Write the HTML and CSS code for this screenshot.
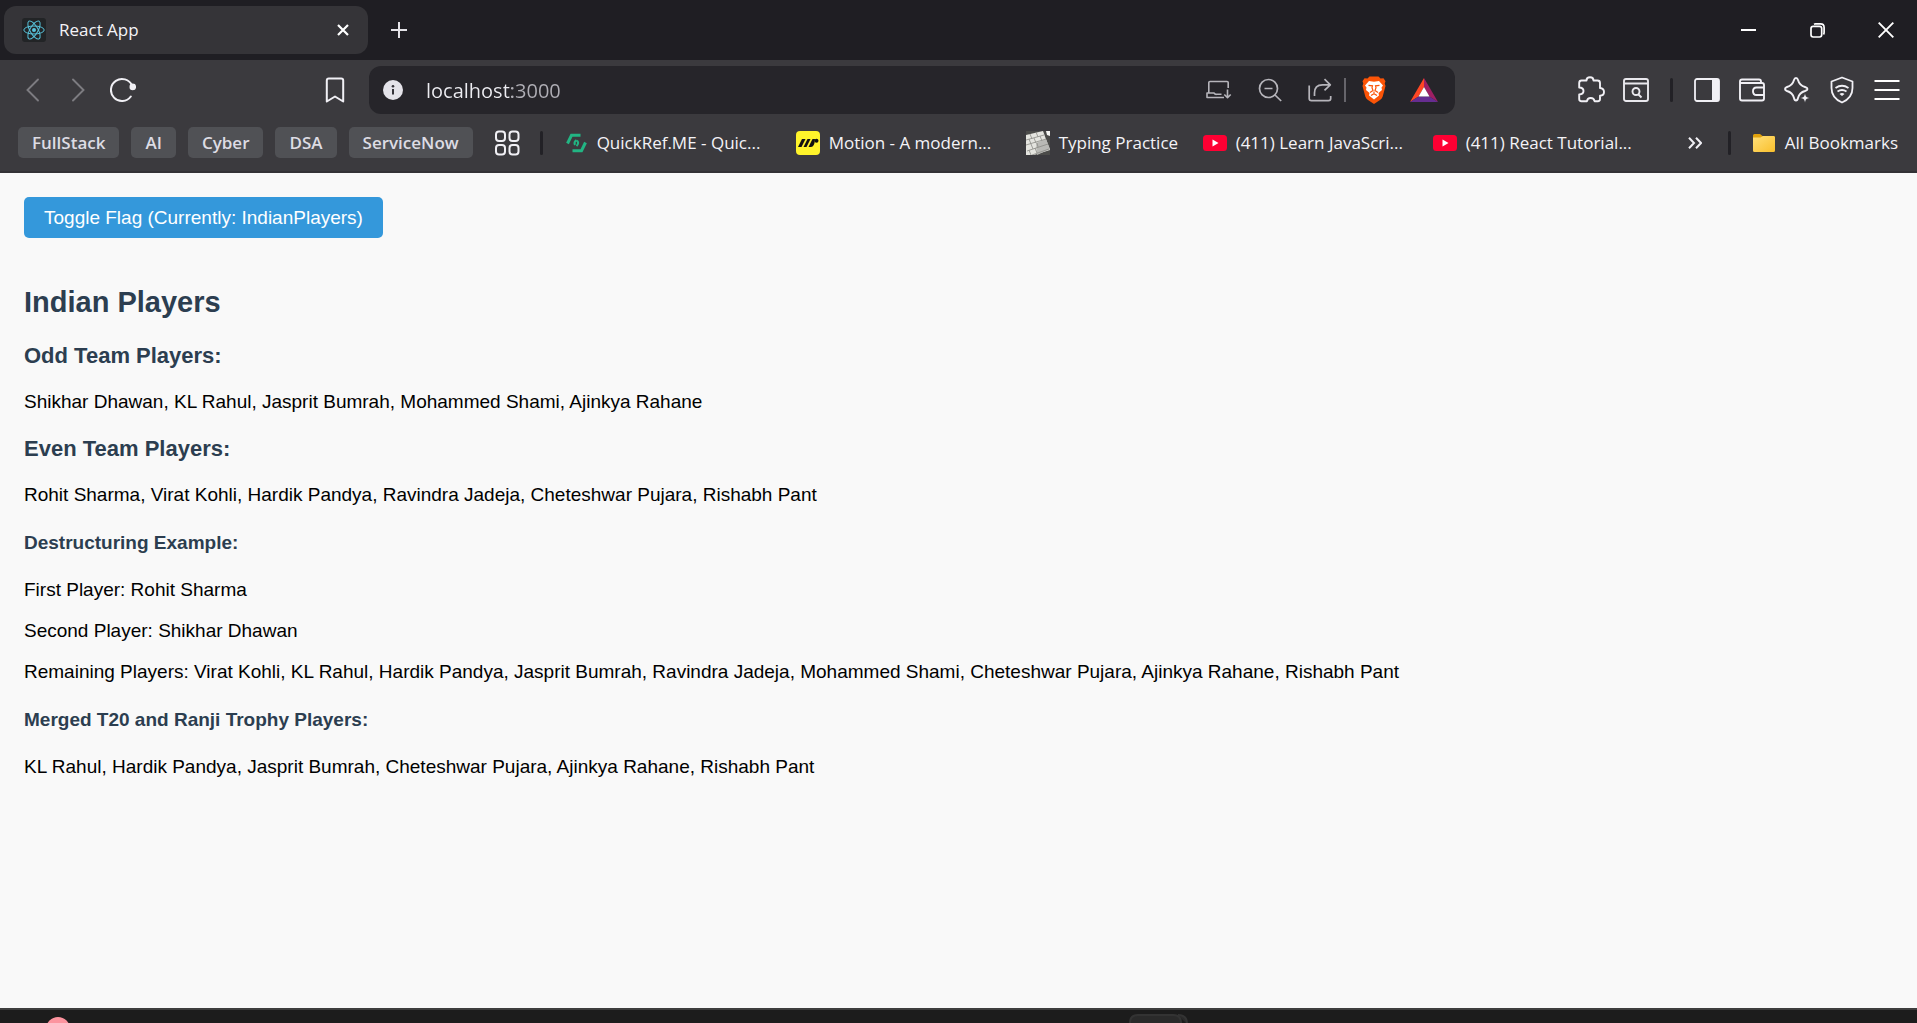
FILE: index.html
```html
<!DOCTYPE html>
<html lang="en">
<head>
<meta charset="utf-8">
<title>React App</title>
<link rel="stylesheet" href="styles.css">
</head>
<body>
<header class="browser">
  <div class="tabstrip">
    <div class="tab">
      <svg class="tab-icon" width="24" height="24" viewBox="0 0 24 24" fill="none" stroke="#58c4dc" stroke-width="1"><rect width="24" height="24" rx="3" fill="#222426" stroke="none"/><ellipse cx="12" cy="12" rx="10.2" ry="4"/><ellipse cx="12" cy="12" rx="10.2" ry="4" transform="rotate(60 12 12)"/><ellipse cx="12" cy="12" rx="10.2" ry="4" transform="rotate(120 12 12)"/><circle cx="12" cy="12" r="2" fill="#58c4dc" stroke="none"/></svg>
      <span class="tab-title">React App</span>
      <button class="tab-close" aria-label="Close tab"><svg width="12" height="12" viewBox="0 0 12 12" stroke="#fff" stroke-width="2.2"><path d="M1 1l10 10M11 1L1 11"/></svg></button>
    </div>
    <button class="new-tab" aria-label="New tab"><svg width="16" height="16" viewBox="0 0 16 16" stroke="#e4e3e8" stroke-width="2"><path d="M8 0v16M0 8h16"/></svg></button>
    <div class="window-controls">
      <button aria-label="Minimize"><svg width="15" height="15" viewBox="0 0 15 15" stroke="#fff" stroke-width="2"><path d="M0 7h15"/></svg></button>
      <button aria-label="Restore"><svg width="15" height="15" viewBox="0 0 15 15" fill="none" stroke="#fff" stroke-width="1.7"><rect x="1" y="3.3" width="10.7" height="10.7" rx="2.2"/><path d="M4 1.2Q4.600 .9 5.500 .9H10.500Q14.100.9 14.100 4.500V9.500Q14.100 10.700 13.500 11.500"/></svg></button>
      <button aria-label="Close"><svg width="16" height="16" viewBox="0 0 16 16" stroke="#fff" stroke-width="1.9"><path d="M.7.7l14.600 14.600M15.300.7L.7 15.300"/></svg></button>
    </div>
  </div>

  <div class="toolbar">
    <div class="nav">
      <button aria-label="Back"><svg width="26" height="26" viewBox="0 0 26 26" fill="none" stroke="#7d7c81" stroke-width="1.900" stroke-linecap="round"><path d="M18 2.500L7.500 13L18 23.500"/></svg></button>
      <button aria-label="Forward"><svg width="26" height="26" viewBox="0 0 26 26" fill="none" stroke="#7d7c81" stroke-width="1.900" stroke-linecap="round"><path d="M8 2.500L18.500 13L8 23.500"/></svg></button>
      <button aria-label="Reload"><svg width="26" height="26" viewBox="0 0 26 26" fill="none" stroke="#f1f0f5" stroke-width="2" stroke-linecap="round"><path d="M22 8.500A11 11 0 1 0 20.800 19.500"/><circle cx="22.800" cy="9.900" r="3.300" fill="#f1f0f5" stroke="none"/></svg></button>
    </div>
    <button class="save-page" aria-label="Bookmark this tab"><svg width="20" height="26" viewBox="0 0 20 26" fill="none" stroke="#f1f0f5" stroke-width="2" stroke-linejoin="round"><path d="M1.800 3.500Q1.800 1.500 3.800 1.500H16.200Q18.200 1.500 18.200 3.500V24.500L10 19.500L1.800 24.500Z"/></svg></button>
    <div class="address">
      <svg width="20" height="20" viewBox="0 0 20 20"><circle cx="10" cy="10" r="10" fill="#e4e3e9"/><path d="M10 9v5.500" stroke="#343338" stroke-width="2"/><circle cx="10" cy="6.200" r="1.300" fill="#343338"/></svg>
      <input class="url" type="text" aria-label="Address" value="localhost:3000">
      <div class="address-actions">
        <button aria-label="Install app"><svg width="26" height="20" viewBox="0 0 26 20" fill="none" stroke="#b6b5bb" stroke-width="1.600" stroke-linejoin="round"><path d="M22.200 8V2.500Q22.200 1.500 21 1.500H4Q2.800 1.500 2.800 2.500V13H1V17.500H18M2.800 13H8Q9 14.500 10.500 14.300H15.500M21.500 9.500V17.500M18.300 14.500L21.500 17.700L24.700 14.500"/></svg></button>
        <button aria-label="Zoom"><svg width="24" height="24" viewBox="0 0 24 24" fill="none" stroke="#b6b5bb" stroke-width="1.700"><circle cx="10.500" cy="10.500" r="9"/><path d="M6.500 10.500h8M17 17l6.200 6"/></svg></button>
        <button aria-label="Share"><svg width="24" height="24" viewBox="0 0 24 24" fill="none" stroke="#b6b5bb" stroke-width="1.700" stroke-linejoin="round"><path d="M1.200 7.500V20.500Q1.200 22.700 3.400 22.700H20.500Q22.700 22.700 22.700 20.500V18M6.500 18V15Q6.500 6.800 14.500 6.800H22M16.500 1.200L22.300 6.800L16.500 12.400"/></svg></button>
      </div>
      <span class="address-rule"></span>
      <button class="shields" aria-label="Brave Shields"><svg width="24" height="28" viewBox="0 0 24 28"><path d="M7.500.5H16.500L18.500 2.600L21.500 2.300L23.500 5.200L22.700 7.500L23.500 10L20.700 20.500Q20 22.500 18 24L12 28L6 24Q4 22.500 3.300 20.500L.5 10L1.300 7.500L.5 5.200L2.500 2.300L5.500 2.600Z" fill="#fb5407"/><path d="M7 5L12 5.800L17 5L21 9.500L19.500 11.500L20 14L16.500 17L17 19.500L12 23.500L7 19.500L7.500 17L4 14L4.500 11.500L3 9.500Z" fill="#fff"/><path d="M6.500 9.300L10.500 9.800L10 11.700L11 14.500L8 16.500M17.500 9.300L13.500 9.800L14 11.700L13 14.500L16 16.500M9 19.500L12 17.700L15 19.500M12 15.500V17.700" fill="none" stroke="#fb5407" stroke-width="1.200"/></svg></button>
      <button class="rewards" aria-label="Brave Rewards"><svg width="28" height="24" viewBox="0 0 28 24"><path d="M14 0L0 24L8.500 18.500L14 9Z" fill="#ff4724"/><path d="M14 0L28 24L19.500 18.500L14 9Z" fill="#9e1f63"/><path d="M0 24H28L19.500 18.500H8.500Z" fill="#662d91"/><path d="M14 9L8.500 18.500H19.500Z" fill="#fff"/></svg></button>
    </div>
    <div class="extensions">
      <button aria-label="Extensions"><svg width="28" height="28" viewBox="0 0 28 28" fill="none" stroke="#f1f0f5" stroke-width="1.900" stroke-linejoin="round"><path d="M4.500 4.500H9.500Q9.500 1.200 13 1.200T16.500 4.500H20.500Q23 4.500 23 7V12Q27 12.500 27 16T23 19.800V23Q23 25.200 20.800 25.200H17.500Q17 22 13.700 22T10 25.200H4.500Q2.200 25.200 2.200 23V18.500Q6.500 18.300 6.500 15T2.200 11.500V7Q2.200 4.500 4.500 4.500Z"/></svg></button>
      <button aria-label="Page search"><svg width="26" height="26" viewBox="0 0 26 26" fill="none" stroke="#e9e8ed" stroke-width="1.900"><rect x="1" y="2" width="24" height="22" rx="2"/><path d="M1 6.500h24M15 17l3.500 3.500"/><circle cx="13" cy="14.500" r="3.500"/></svg></button>
      <span class="bar-rule"></span>
      <button aria-label="Sidebar"><svg width="26" height="26" viewBox="0 0 26 26"><rect x="1" y="2" width="24" height="22" rx="2" fill="none" stroke="#f1f0f5" stroke-width="1.800"/><path d="M18 2h6q1 0 1 1v20q0 1-1 1h-6z" fill="#f1f0f5"/></svg></button>
      <button aria-label="Wallet"><svg width="26" height="26" viewBox="0 0 26 26" fill="none" stroke="#f1f0f5" stroke-width="1.900"><path d="M22 6V4.500Q22 2.500 20 2.500H3Q1 2.500 1 4.500V21.500Q1 23.500 3 23.500H23Q25 23.500 25 21.500V8Q25 6 23 6H1M25 10.500H17.500Q14 10.500 14 14.200T17.500 18H25"/></svg></button>
      <button aria-label="Leo AI"><svg width="26" height="26" viewBox="0 0 26 26" fill="none" stroke="#f1f0f5" stroke-width="1.900" stroke-linejoin="round"><path d="M12 1Q13.500 1 14 3Q15.500 8.500 21 10Q23.500 10.800 23.500 12T21 14Q15.500 15.500 14 21Q13.500 23.500 12 23.500T10 21Q8.500 15.500 3 14Q1 13.300 1 12T3 10Q8.500 8.500 10 3Q10.500 1 12 1Z"/><path d="M21 16.500L22.300 19.700L25.500 21L22.300 22.300L21 25.500L19.700 22.300L16.500 21L19.700 19.700Z" fill="#f1f0f5" stroke="#3b3a3e" stroke-width=".5"/></svg></button>
      <button aria-label="VPN"><svg width="24" height="28" viewBox="0 0 24 28" fill="none" stroke="#f1f0f5" stroke-width="1.800" stroke-linejoin="round"><path d="M12 1.500L22.500 5.500V12Q22.500 22 12 26.500Q1.500 22 1.500 12V5.500Z"/><path d="M5.500 12Q12 7.500 18.500 12M7.500 15.500Q12 12.500 16.500 15.500"/><path d="M9.500 18Q12 16 14.500 18L12 20Z" fill="#f1f0f5" stroke="none"/></svg></button>
      <button aria-label="Menu"><svg width="26" height="26" viewBox="0 0 26 26" stroke="#fff" stroke-width="2"><path d="M.5 4h25M.5 13h25M.5 22h25"/></svg></button>
    </div>
  </div>

  <nav class="bookmarks">
    <div class="groups">
      <button>FullStack</button>
      <button>AI</button>
      <button>Cyber</button>
      <button>DSA</button>
      <button>ServiceNow</button>
    </div>
    <button class="apps" aria-label="Apps"><svg width="26" height="26" viewBox="0 0 26 26" fill="none" stroke="#f1f0f5" stroke-width="2"><rect x="2" y="1.500" width="9" height="9.500" rx="3"/><rect x="15.500" y="1.500" width="9" height="9.500" rx="3"/><rect x="2" y="15" width="9" height="9.500" rx="3"/><rect x="15.500" y="15" width="9" height="9.500" rx="3"/></svg></button>
    <span class="bar-rule"></span>
    <div class="links">
      <a class="link" href="#"><svg width="22" height="20" viewBox="0 0 22 20" fill="none" stroke="#22b583" stroke-width="3"><path d="M1.500 10.500L5.500 2.300H14.500M19.500 9.500L15.500 17.700H6.500"/><path d="M10.500 7Q7.500 9 9 12M11 7.500Q13.500 10 10.500 13" stroke-width="2"/></svg>QuickRef.ME - Quic...</a>
      <a class="link" href="#"><svg width="24" height="24" viewBox="0 0 24 24"><rect width="24" height="24" rx="4" fill="#fff42b"/><path d="M2 16L6 8H9.500L5.500 16ZM7.500 16L11.500 8H14.500L10.500 16ZM12.500 16L16.500 8H19Q18.500 16 15 16Z" fill="#111"/><circle cx="20.500" cy="9.800" r="2" fill="#111"/></svg>Motion - A modern...</a>
      <a class="link link-short" href="#"><svg width="24" height="24" viewBox="0 0 24 24"><path d="M0 0H24V24H0Z" fill="#4b4b49"/><path d="M0 4L17 0L24 19L8 24H0Z" fill="#e4e4df"/><path d="M10 12L20 8L24 18L11 24Z" fill="#b9b9b5"/><path d="M20 0H24V5L21 4Z" fill="#f5f5f2"/><path d="M0 9L18 4M0 14L20 8M1 20L22 13M6 24L23 18M4 3L6 8M10 1L12 6M3 8L5 13M8 7L10 12M14 5L16 10M5 13L7 18M11 12L12 16M3 19L5 24M9 17L11 22" stroke="#8b8b87" stroke-width=".8"/></svg>Typing Practice</a>
      <a class="link" href="#"><svg width="24" height="16" viewBox="0 0 24 16"><rect width="24" height="16" rx="3.500" fill="#ff0033"/><path d="M9.500 4.500L15.500 8L9.500 11.500Z" fill="#fff"/></svg>(411) Learn JavaScri...</a>
      <a class="link" href="#"><svg width="24" height="16" viewBox="0 0 24 16"><rect width="24" height="16" rx="3.500" fill="#ff0033"/><path d="M9.500 4.500L15.500 8L9.500 11.500Z" fill="#fff"/></svg>(411) React Tutorial...</a>
    </div>
    <button class="more" aria-label="More bookmarks"><svg width="14" height="12" viewBox="0 0 14 12" fill="none" stroke="#f1f0f5" stroke-width="2"><path d="M1 .8L6 6L1 11.200M8 .8L13 6L8 11.200"/></svg></button>
    <span class="bar-rule"></span>
    <a class="all" href="#"><svg width="24" height="20" viewBox="0 0 24 20"><defs><linearGradient id="folder" x2="1" y2="1"><stop offset="0" stop-color="#ffe07a"/><stop offset="1" stop-color="#f9bf2c"/></linearGradient></defs><path d="M1 2.500Q1 1 2.500 1H8L10.500 3H21.500Q23 3 23 4.500V10H1Z" fill="#e0a10c"/><path d="M1 4.500H8.500L11 3H21.500Q23 3 23 4.500V17.500Q23 19 21.500 19H2.500Q1 19 1 17.500Z" fill="url(#folder)"/></svg>All Bookmarks</a>
  </nav>
</header>

<main class="page">
  <button class="toggle">Toggle Flag (Currently: IndianPlayers)</button>
  <h2>Indian Players</h2>
  <h3>Odd Team Players:</h3>
  <p>Shikhar Dhawan, KL Rahul, Jasprit Bumrah, Mohammed Shami, Ajinkya Rahane</p>
  <h3>Even Team Players:</h3>
  <p>Rohit Sharma, Virat Kohli, Hardik Pandya, Ravindra Jadeja, Cheteshwar Pujara, Rishabh Pant</p>
  <h4>Destructuring Example:</h4>
  <p>First Player: Rohit Sharma</p>
  <p>Second Player: Shikhar Dhawan</p>
  <p>Remaining Players: Virat Kohli, KL Rahul, Hardik Pandya, Jasprit Bumrah, Ravindra Jadeja, Mohammed Shami, Cheteshwar Pujara, Ajinkya Rahane, Rishabh Pant</p>
  <h4>Merged T20 and Ranji Trophy Players:</h4>
  <p>KL Rahul, Hardik Pandya, Jasprit Bumrah, Cheteshwar Pujara, Ajinkya Rahane, Rishabh Pant</p>
</main>

<footer class="taskbar">
  <svg class="task-badge" width="22" height="13" viewBox="0 0 22 13"><circle cx="11" cy="19" r="12" fill="#fc949f"/></svg>
  <svg class="task-window" width="60" height="13" viewBox="0 0 60 13" fill="#2a2a2a" stroke="#333" stroke-width="2"><path d="M49 5Q58 5 58 14"/><path d="M1 16V13Q1 5 9 5H44Q52 5 52 13V16Z"/></svg>
</footer>
</body>
</html>
```
FILE: styles.css
```css
* {
  box-sizing: border-box;
}

body {
  display: flex;
  flex-direction: column;
  min-height: 100vh;
  margin: 0;
  background: #f9f9f9;
  color: #000;
  font-family: "Liberation Sans", Arial, sans-serif;
}

button {
  padding: 0;
  border: 0;
  background: none;
  color: inherit;
  font: inherit;
}

svg {
  display: block;
  flex: none;
}

/* Browser frame */

.browser {
  background: #3b3a3e;
  color: #f4f3f7;
  font-family: "Open Sans", "Noto Sans", sans-serif;
  font-size: 17px;
}

.browser button {
  display: flex;
  align-items: center;
  justify-content: center;
}

.tabstrip {
  display: flex;
  align-items: center;
  height: 60px;
  padding-left: 4px;
  background: #1f1e23;
}

.tab {
  display: flex;
  align-items: center;
  gap: 13px;
  width: 364px;
  height: 48px;
  padding: 0 12px 0 18px;
  border-radius: 12px;
  background: #353438;
}

.tab-title {
  flex: 1;
  line-height: 22px;
}

.browser .tab-close {
  width: 26px;
  height: 26px;
}

.browser .new-tab {
  width: 48px;
  height: 48px;
  margin-left: 7px;
}

.window-controls {
  display: flex;
  gap: 7px;
  margin-left: auto;
}

.window-controls button {
  width: 62px;
  height: 60px;
}

.toolbar {
  display: flex;
  align-items: center;
  height: 60px;
  padding: 0 8px 0 11px;
}

.nav,
.extensions {
  display: flex;
  align-items: center;
  gap: 1px;
}

.toolbar .nav button,
.toolbar .extensions button,
.toolbar .save-page {
  width: 44px;
  height: 44px;
}

.toolbar .save-page {
  margin: 0 12px 0 168px;
}

.address {
  display: flex;
  flex: 1;
  align-items: center;
  height: 48px;
  margin-right: 114px;
  padding: 0 17px 0 14px;
  border-radius: 12px;
  background: #26252a;
}

.url {
  flex: 1;
  min-width: 0;
  height: 40px;
  padding: 0;
  margin-left: 23px;
  border: 0;
  outline: 0;
  background: linear-gradient(to right, #ededf2 86px, #b0afb6 86px);
  background-clip: text;
  -webkit-background-clip: text;
  color: transparent;
  font-family: inherit;
  font-size: 20px;
}

.address-actions {
  display: flex;
  align-items: center;
  gap: 26px;
}

.address-rule {
  width: 2px;
  height: 24px;
  margin: 0 16px 0 12px;
  background: #66656b;
}

.browser .rewards {
  margin-left: 24px;
}

.bar-rule {
  width: 3px;
  height: 24px;
  border-radius: 2px;
  background: #222126;
}

.extensions .bar-rule {
  margin: 0 11px;
}

.bookmarks {
  display: flex;
  align-items: center;
  height: 53px;
  padding: 0 19px 6px 18px;
  border-bottom: 2px solid #333236;
}

.groups {
  display: flex;
  gap: 12px;
}

.groups button {
  height: 31px;
  padding: 0 14px;
  border-radius: 5px;
  background: #505155;
  color: #dddce4;
  font-weight: 600;
}

.bookmarks .apps {
  margin: 0 20px 0 21px;
}

.links {
  display: flex;
  flex: 1;
  min-width: 0;
  margin-left: 23px;
}

.link,
.all {
  display: flex;
  align-items: center;
  gap: 9px;
  color: inherit;
  text-decoration: none;
  white-space: nowrap;
}

.link {
  width: 230px;
}

.link-short {
  width: 177px;
}

.bookmarks .more {
  margin-right: 26px;
}

.all {
  margin-left: 21px;
}

/* Page */

.page {
  flex: 1;
  padding: 24px;
  font-size: 19px;
  line-height: 22px;
}

.toggle {
  margin-bottom: 24px;
  padding: 10px 20px;
  border-radius: 5px;
  background: #3498db;
  color: #fff;
  line-height: 21px;
}

h2,
h3,
h4 {
  color: #2c3e50;
}

h2 {
  margin: 24px 0;
  font-size: 29px;
  line-height: 33px;
}

h3 {
  margin: 23px 0;
  font-size: 22px;
  line-height: 25px;
}

h4 {
  margin: 26px 0 25px;
  font-size: 19px;
}

p {
  margin: 19px 0;
}

/* Taskbar */

.taskbar {
  display: flex;
  height: 15px;
  overflow: hidden;
  border-top: 2px solid #3e3e3e;
  background: #1c1c1c;
}

.task-badge {
  margin-left: 47px;
}

.task-window {
  margin-left: 1060px;
}
```
